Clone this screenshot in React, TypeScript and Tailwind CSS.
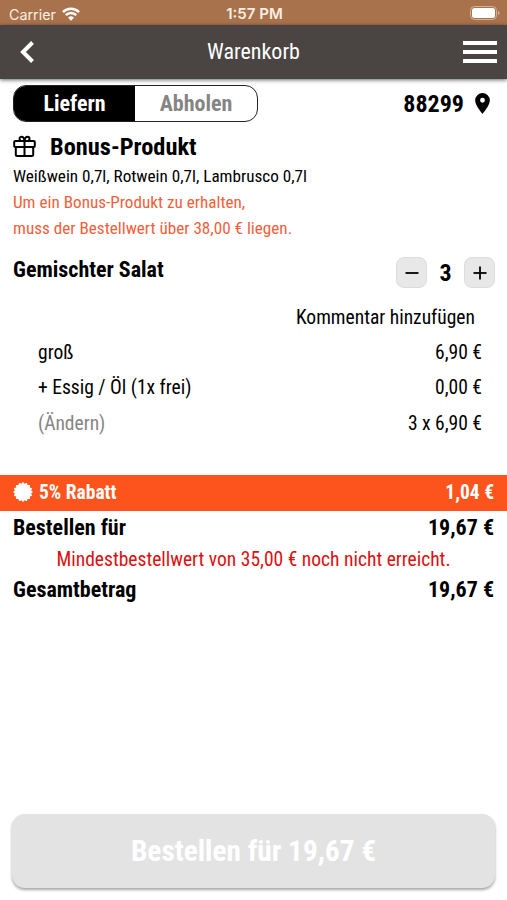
import type { ReactNode } from 'react'

interface RowProps {
  left: ReactNode
  right: string
  className?: string
}

const Row = ({ left, right, className = '' }: RowProps) => (
  <div className={`flex items-center justify-between whitespace-nowrap ${className}`}>
    <span className="flex items-center">{left}</span>
    <span>{right}</span>
  </div>
)

function StatusBar() {
  return (
    <div className="grid h-[25px] grid-cols-3 items-center bg-[#a8724c] pt-[3px] pr-[7px] pl-[9px] font-['Inter',sans-serif] text-[14.300px] text-[#fbeee2]">
      <div className="flex items-center gap-[6px]">
        <span>Carrier</span>
        <svg width="18" height="14" viewBox="0 0 19 14" fill="none" stroke="white" strokeWidth="2.6">
          <path d="M1 4.900a12 12 0 0 1 17 0" />
          <path d="M4 8.300a7.800 7.800 0 0 1 11 0" />
          <path d="M9.500 14 6.400 10.900a4.400 4.400 0 0 1 6.200 0Z" fill="white" stroke="none" />
        </svg>
      </div>
      <span className="text-center text-[15px] font-semibold">1:57 PM</span>
      <svg className="mb-[2px] justify-self-end" width="30" height="14" viewBox="0 0 30 14">
        <rect x="0.500" y="0.500" width="26" height="13" rx="4" fill="none" stroke="#d2b299" />
        <rect x="2" y="2" width="23" height="10" rx="2.500" fill="white" />
        <path d="M28 5v4q1.600-.6 1.600-2T28 5Z" fill="#d2b299" />
      </svg>
    </div>
  )
}

function Header() {
  return (
    <header className="grid h-[54px] grid-cols-3 items-center bg-[#4a4543] px-[10px] text-white shadow-[0_1px_4px_rgba(0,0,0,0.6)]">
      <svg className="ml-[10px]" width="15" height="22" viewBox="0 0 15 22" fill="none" stroke="white" strokeWidth="4">
        <path d="M12.500 1.500 3 11l9.500 9.500" />
      </svg>
      <h1 className="pb-[2px] text-center text-[22px]">Warenkorb</h1>
      <div className="flex w-[34px] flex-col gap-[5px] justify-self-end">
        <span className="h-1 bg-white" />
        <span className="h-1 bg-white" />
        <span className="h-1 bg-white" />
      </div>
    </header>
  )
}

function StepButton({ plus = false }: { plus?: boolean }) {
  return (
    <button className="flex size-[31px] items-center justify-center rounded-[8px] border border-[#dcdcdc] bg-[#e8e8e8]">
      <svg width="14" height="14" viewBox="0 0 14 14" stroke="black" strokeWidth="1.8">
        <path d="M0.500 7h13" />
        {plus && <path d="M7 0.500v13" />}
      </svg>
    </button>
  )
}

const sealPoints = Array.from({ length: 32 }, (_, i) => {
  const r = i % 2 ? 8.3 : 10
  const a = (i * Math.PI) / 16
  return `${10 + r * Math.sin(a)},${10 - r * Math.cos(a)}`
}).join(' ')

export default function App() {
  return (
    <div className="flex h-[900px] w-[507px] flex-col bg-white font-['Roboto_Condensed','Roboto',sans-serif] text-black [font-stretch:75%]">
      <StatusBar />
      <Header />

      <main className="flex flex-1 flex-col">
        <section className="px-[13px] pt-[6px]">
          <div className="flex h-[37px] items-center justify-between">
            <div className="flex h-[37px] w-[245px] overflow-hidden rounded-[13px] border border-[#222] text-[22px] leading-[35px] font-bold">
              <button className="w-[121px] bg-black text-white">Liefern</button>
              <button className="flex-1 text-[#858585]">Abholen</button>
            </div>
            <div className="flex items-center gap-[11px] pr-[4px] text-[24px] font-bold">
              <span>88299</span>
              <svg width="15" height="21" viewBox="0 0 14 20">
                <path
                  fillRule="evenodd"
                  d="M7 0a7 7 0 0 0-7 7c0 5.200 7 13 7 13s7-7.800 7-13a7 7 0 0 0-7-7Zm0 9.200a2.300 2.300 0 1 1 0-4.600 2.300 2.300 0 0 1 0 4.600Z"
                />
              </svg>
            </div>
          </div>

          <div className="mt-[9px] flex h-[32px] items-center gap-[14px]">
            <svg className="mb-[2px]" width="23" height="23" viewBox="0 0 23 23" fill="none" stroke="black" strokeWidth="2">
              <rect x="1.200" y="6" width="20.600" height="6" rx="1" />
              <path d="M2.800 12v7.500q0 1.500 1.500 1.500h14.400q1.500 0 1.500-1.500V12M11.500 6v15" />
              <path d="M11.500 6C11 2.500 9.500 1.800 8.500 1.800a2 2 0 0 0-2 2c0 1.200.8 2.200 2.300 2.200M11.500 6c.5-3.500 2-4.200 3-4.200a2 2 0 0 1 2 2c0 1.200-.8 2.200-2.300 2.200" />
            </svg>
            <h2 className="text-[24.400px] font-bold">Bonus-Produkt</h2>
          </div>
          <p className="text-[17.150px] leading-[26px]">Weißwein 0,7l, Rotwein 0,7l, Lambrusco 0,7l</p>
          <p className="text-[17.150px] leading-[26px] text-[#f2603a]">
            Um ein Bonus-Produkt zu erhalten,
            <br />
            muss der Bestellwert über 38,00 € liegen.
          </p>
        </section>

        <section className="pt-[15px] pr-[12px] pl-[13px]">
          <div className="flex h-[33px] items-center justify-between">
            <h3 className="pb-[6px] text-[22px] font-bold">Gemischter Salat</h3>
            <div className="flex items-center">
              <StepButton />
              <span className="w-[37px] text-center text-[24px] leading-[30px] font-bold">3</span>
              <StepButton plus />
            </div>
          </div>
          <div className="mt-[11px] pr-[20px] text-right text-[19.550px] leading-[36px]">Kommentar hinzufügen</div>
          <div className="pr-[13px] pl-[25px] text-[19.550px]">
            <Row left="groß" right="6,90 €" className="h-[34px]" />
            <Row left="+ Essig / Öl (1x frei)" right="0,00 €" className="h-[36px]" />
            <Row left={<span className="text-[#858585]">(Ändern)</span>} right="3 x 6,90 €" className="h-[35px]" />
          </div>
        </section>

        <section className="mt-[34px]">
          <Row
            left={
              <>
                <svg className="mr-[6px] mb-[2px]" width="20" height="20" viewBox="0 0 20 20" fill="white">
                  <polygon points={sealPoints} />
                </svg>
                5% Rabatt
              </>
            }
            right="1,04 €"
            className="h-[36px] bg-[#fd531d] px-[13px] text-[19.500px] font-bold text-white"
          />
          <Row left="Bestellen für" right="19,67 €" className="h-[32px] px-[13px] text-[22px] font-bold" />
          <p className="h-[31px] text-center text-[19.550px] leading-[33px] text-[#dc1010]">
            Mindestbestellwert von 35,00 € noch nicht erreicht.
          </p>
          <Row left="Gesamtbetrag" right="19,67 €" className="h-[30px] px-[13px] text-[22px] font-bold" />
        </section>

        <button className="mx-[12px] mt-auto mb-[12px] h-[74px] rounded-[13px] bg-[#e3e3e3] pt-[2px] text-[29.300px] font-bold text-white shadow-[0_2px_3px_rgba(0,0,0,0.35)]">
          Bestellen für 19,67 €
        </button>
      </main>
    </div>
  )
}
